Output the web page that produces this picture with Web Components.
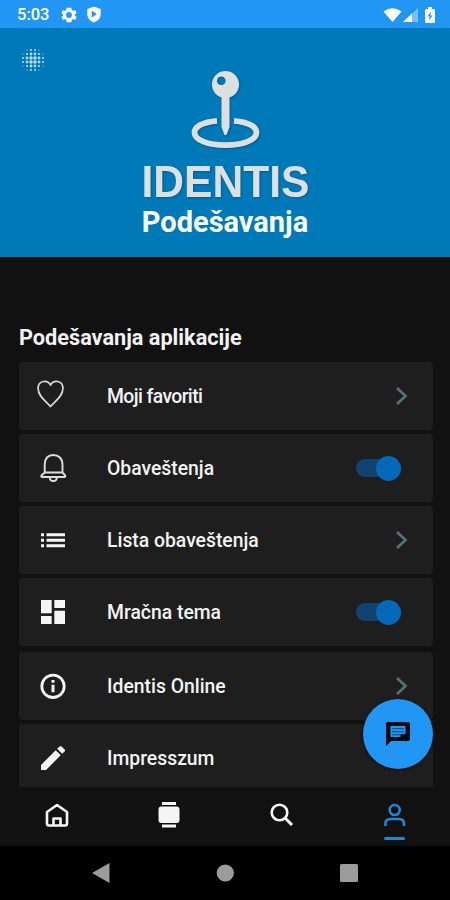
<!doctype html>
<html lang="sr-Latn">
    <head>
        <meta charset="utf-8" />
        <title>Identis - Podešavanja</title>
        <meta name="viewport" content="width=device-width, initial-scale=1.0" />
        <style>
        :root {
            --color-status: #2196f3;
            --color-header: #0079b9;
            --color-background: #111111;
            --color-row: #1e1e1e;
            --color-text: #f3f3f3;
            --color-accent: #2185d8;
        }

        body {
            margin: 0;
            background: #000;
            color: var(--color-text);
            font-family: Roboto, "Noto Sans", sans-serif;
            font-weight: 500;
        }

        setting-row[icon="heart"] {
            letter-spacing: -0.6px;
        }
        </style>
    </head>
    <body>
        <settings-app>
            <status-bar slot="top" time="5:03"></status-bar>
            <app-header slot="top">Podešavanja</app-header>
            <settings-list heading="Podešavanja aplikacije">
                <setting-row icon="heart" control="chevron">Moji favoriti</setting-row>
                <setting-row icon="bell" control="switch">Obaveštenja</setting-row>
                <setting-row icon="list" control="chevron">Lista obaveštenja</setting-row>
                <setting-row icon="dashboard" control="switch">Mračna tema</setting-row>
                <setting-row icon="info" control="chevron">Identis Online</setting-row>
                <setting-row icon="pencil">Impresszum</setting-row>
            </settings-list>
            <chat-button slot="floating"></chat-button>
            <tab-bar slot="bottom"></tab-bar>
            <system-bar slot="bottom"></system-bar>
        </settings-app>

        <template id="template-settings-app">
            <style>
            :host {
                display: flex;
                flex-direction: column;
                position: relative;
                width: 450px;
                height: 900px;
                overflow: hidden;
                background: var(--color-background);
            }

            main {
                flex: 1;
                min-height: 0;
                overflow: hidden;
            }

            /* the chat button floats over the list */
            #floating {
                position: absolute;
                right: 17px;
                bottom: 131px;
            }
            </style>
            <slot name="top"></slot>
            <main><slot></slot></main>
            <slot name="bottom"></slot>
            <div id="floating"><slot name="floating"></slot></div>
        </template>

        <template id="template-status-bar">
            <style>
            :host {
                display: flex;
                align-items: center;
                box-sizing: border-box;
                height: 28px;
                padding: 1px 15px 0 17px;
                background: var(--color-status);
                color: #fff;
                font-size: 16.5px;
            }

            #time { width: 44px; }
            #right { margin-left: auto; display: flex; align-items: center; }
            svg { display: block; fill: #fff; }
            #shield { margin-left: 9px; }
            #battery { margin-left: 7px; }
            </style>
            <span id="time"></span>
            <svg width="16" height="16" viewBox="2 2 20 20"><path fill-rule="evenodd" d="M19.4 13a7.5 7.5 0 0 0 0-2l2.1-1.6-2-3.5-2.500 1a7 7 0 0 0-1.700-1L15 3H9l-.4 2.900a7 7 0 0 0-1.700 1l-2.500-1-2 3.500L4.600 11a7.500 7.500 0 0 0 0 2l-2.100 1.600 2 3.500 2.500-1a7 7 0 0 0 1.700 1L9 21h6l.4-2.900a7 7 0 0 0 1.700-1l2.500 1 2-3.500zM12 15.600a3.600 3.600 0 1 1 0-7.200 3.600 3.600 0 0 1 0 7.200z"/></svg>
            <svg id="shield" width="16" height="17" viewBox="0 0 16 17"><path fill-rule="evenodd" d="M8 .5 14.700 3v5c0 4-2.600 7-6.700 8.500C3.900 15 1.300 12 1.300 8V3zM5.700 4.700v7L11 8z"/></svg>
            <div id="right">
                <svg width="19" height="14" viewBox="0 0 19 14"><path d="M.5 3.500Q9.500-3 18.500 3.500L9.500 14z"/></svg>
                <svg width="16" height="14" viewBox="0 0 16 14"><path opacity=".4" d="M16 0v14H1z"/><path d="M10 5.500V14H1z"/></svg>
                <svg id="battery" width="10" height="16" viewBox="0 0 10 16"><path d="M3 0h4v2h1.500Q10 2 10 3.500v11Q10 16 8.500 16h-7Q0 16 0 14.500v-11Q0 2 1.500 2H3z"/><path fill="#2196f3" d="M6 4.500 2.600 9.200h2L4 13.500l3.400-5h-2z"/></svg>
            </div>
        </template>

        <template id="template-app-header">
            <style>
            :host {
                display: grid;
                grid-template-columns: 66px 1fr 66px;
                box-sizing: border-box;
                height: 229px;
                background: var(--color-header);
                color: #fff;
            }

            #dots { margin: 20px 0 0 21px; }
            #brand { display: flex; flex-direction: column; align-items: center; padding-top: 38px; }
            #logo { overflow: visible; filter: drop-shadow(1px 1px 1px #00406880); }
            #title { margin-top: 2px; line-height: 36px; font-size: 29px; font-weight: 700; }
            svg { display: block; }
            </style>
            <svg id="dots" width="24" height="24" fill="#b9dcef"></svg>
            <div id="brand">
                <svg id="logo" width="190" height="136" viewBox="130 66 190 136">
                    <path fill="none" stroke="#dedfe1" stroke-width="5.800" d="M217 120.800C202 122 194.500 127 194.500 132.500C194.500 140 208 145.200 225.500 145.200S256.500 140 256.500 132.500C256.500 127 249 122 234 120.800"/>
                    <path fill="#dedfe1" fill-rule="evenodd" d="M225.500 71a13.500 13.500 0 0 1 4 26.400V127L226.500 135h-2L221.500 127V97.400A13.500 13.500 0 0 1 225.500 71zM221.300 76.500a4.300 4.300 0 1 0 .01 0z"/>
                    <text x="141.500" y="197" textLength="168" lengthAdjust="spacingAndGlyphs" fill="#dedfe1" font-family="Liberation Sans, Arial, sans-serif" font-size="45" font-weight="700">IDENTIS</text>
                </svg>
                <div id="title"><slot></slot></div>
            </div>
        </template>

        <template id="template-settings-list">
            <style>
            :host {
                display: block;
                padding: 66px 17px 0 19px;
            }

            h2 {
                margin: 0 0 9px;
                font-size: 21.700px;
                line-height: 30px;
                font-weight: 700;
            }

            #rows {
                display: flex;
                flex-direction: column;
                gap: 4px;
            }

            ::slotted(:nth-child(5)) { margin-top: 2px; }
            </style>
            <h2></h2>
            <div id="rows"><slot></slot></div>
        </template>

        <template id="template-setting-row">
            <style>
            :host {
                display: grid;
                grid-template-columns: 68px 1fr auto;
                align-items: center;
                box-sizing: border-box;
                height: 68px;
                flex: none;
                border-radius: 4px;
                padding: 0 24px 0 0;
                background: var(--color-row);
                font-size: 19.350px;
            }

            #icon { display: grid; place-items: center; }
            #label { padding: 1px 0 0 20px; white-space: nowrap; }
            svg { display: block; }

            #switch {
                display: flex;
                justify-content: flex-end;
                align-items: center;
                width: 45px;
                height: 18px;
                margin-right: 8px;
                border-radius: 9px;
                background: #10436f;
            }

            #switch i {
                flex: none;
                width: 25px;
                height: 25px;
                border-radius: 50%;
                background: #0569b9;
            }
            </style>
            <div id="icon"></div>
            <div id="label"><slot></slot></div>
            <div id="control"></div>
        </template>

        <template id="template-chat-button">
            <style>
            :host {
                display: grid;
                place-items: center;
                width: 70px;
                height: 70px;
                border-radius: 50%;
                background: var(--color-status);
                box-shadow: 0 1px 3px #000000c0;
            }
            </style>
            <svg width="26" height="26" viewBox="0 0 26 26"><path fill="#050b12" fill-rule="evenodd" d="M3 1h20q2 0 2 2v15q0 2-2 2H6l-5 5V3q0-2 2-2zM5.500 5v11h10v-3h5V5z"/><path stroke="#0e5590" stroke-width="1.300" d="M7 7.700h12M7 10.700h12M7 13.700h8"/></svg>
        </template>

        <template id="template-tab-bar">
            <style>
            :host {
                display: grid;
                grid-template-columns: repeat(4, 112.500px);
                height: 59px;
                background: var(--color-background);
                color: #f5f5f5;
            }

            div { display: flex; flex-direction: column; align-items: center; padding-top: 14px; }
            div.active { color: var(--color-accent); }
            div.active::after { content: ""; width: 21px; height: 3px; margin: 8px 0 0 1px; border-radius: 2px; background: currentColor; }
            svg { display: block; fill: none; stroke: currentColor; stroke-width: 2.600; }
            </style>
            <div><svg width="28" height="28" viewBox="0 0 28 28"><path stroke-linejoin="round" d="M5 11 15 4 25 11V22.500q0 2-2 2H7q-2 0-2-2zM11.500 24.500v-7h7v7"/></svg></div>
            <div><svg width="28" height="28" viewBox="0 0 28 28"><path fill="currentColor" stroke="none" d="M7 1h14v3H7zM7 23.500h14v3H7zM6.500 5.500h15q3 0 3 3V19q0 3-3 3h-15q-3 0-3-3V8.500q0-3 3-3z"/></svg></div>
            <div><svg width="28" height="28" viewBox="0 0 28 28"><circle cx="12.500" cy="11.500" r="7.800"/><path stroke-width="3" d="m18 17 7 7"/></svg></div>
            <div class="active"><svg width="28" height="28" viewBox="0 0 28 28"><circle cx="14.700" cy="9" r="5"/><path d="M5.400 25v-2q0-5 5-5H19q5 0 5 5v2"/></svg></div>
        </template>

        <template id="template-system-bar">
            <style>
            :host {
                display: flex;
                align-items: center;
                justify-content: center;
                gap: 106px;
                height: 54px;
                background: #000;
            }

            svg { display: block; fill: #9c9c9c; }
            </style>
            <svg width="18" height="20"><path d="M0 10 17.500 0v20z"/></svg>
            <svg width="18" height="18"><circle cx="9.300" cy="9" r="8.600"/></svg>
            <svg width="18" height="18"><rect width="18" height="18" rx="1.500"/></svg>
        </template>

        <script>
            const ICONS = {
                heart: `<svg width="32" height="32" viewBox="2.500 3 32 32" fill="none" stroke="#d8d8d8" stroke-width="1.700" stroke-linejoin="round"><path d="M16 29.500C12 24.500 3.600 19.500 3.600 11.500C3.600 3 13 2.500 16 8C19 2.500 28.400 3 28.400 11.500C28.400 19.500 20 24.500 16 29.500z"/></svg>`,
                bell: `<svg width="32" height="32" viewBox="0 0 32 32" fill="none" stroke="#dedede" stroke-width="1.900" stroke-linejoin="round"><path d="M7.700 20.500V12.500C7.700 6.500 11 3 16.300 3s9.200 3.500 9.200 9.500v8l2.700 3q.6 1.500-1 1.500H5.400q-1.600 0-1-1.500zM7 20.500h19M12.800 25.500q0 3.500 3.500 3.500t3.500-3.500"/></svg>`,
                list: `<svg width="32" height="32" viewBox="0 0 32 32" fill="none" stroke="#f5f5f5" stroke-width="2.900"><path d="M4 10.800h3M9.500 10.800H28M4 16.300h3M9.500 16.300H28M4 21.800h3M9.500 21.800H28"/></svg>`,
                dashboard: `<svg width="32" height="32" viewBox="0 0 24 24" fill="#f5f5f5"><path d="M3 13h8V3H3zM3 21h8v-6H3zM13 21h8V11h-8zM13 3v6h8V3z"/></svg>`,
                info: `<svg width="32" height="32" viewBox="0 0 32 32" fill="none" stroke="#f5f5f5" stroke-width="2.800"><circle cx="16" cy="16.300" r="11.200"/><path stroke-width="3" d="M16 14.800V22.300M16 10v2.800"/></svg>`,
                pencil: `<svg width="32" height="32" viewBox="0 0 24 24" fill="#f5f5f5"><path d="M3 17.250V21h3.750L17.810 9.940l-3.750-3.750zM20.710 7.040a1 1 0 0 0 0-1.410l-2.340-2.340a1 1 0 0 0-1.410 0l-1.830 1.830 3.750 3.750z"/></svg>`
            }

            const CONTROLS = {
                chevron: `<svg width="14" height="20" viewBox="0 0 14 20" fill="none" stroke="#587078" stroke-width="2.700"><path d="m2 2 8.500 8L2 18"/></svg>`,
                switch: `<div id="switch"><i></i></div>`
            }

            class TemplateElement extends HTMLElement {
                constructor() {
                    super()

                    const template = document.querySelector("#template-" + this.localName)
                    this.root = this.attachShadow({ mode: "open" })
                    this.root.appendChild(template.content.cloneNode(true))
                }
            }

            class StatusBar extends TemplateElement {
                connectedCallback() {
                    this.root.querySelector("#time").textContent = this.getAttribute("time")
                }
            }

            class AppHeader extends TemplateElement {
                connectedCallback() {
                    // round dot grid, dots shrink towards the rim
                    const radii = [ [ 0, .6, 1, 1, .6, 0 ], [ .6, 1.1, 1.4, 1.4, 1.1, .6 ], [ 1, 1.4, 1.8, 1.8, 1.4, 1 ] ]
                    const rows = [ ...radii, ...radii.slice().reverse() ]
                    this.root.querySelector("#dots").innerHTML = rows.map((row, y) =>
                        row.map((r, x) => `<circle cx="${2 + x * 4}" cy="${2 + y * 4}" r="${r}"/>`).join("")
                    ).join("")
                }
            }

            class SettingsList extends TemplateElement {
                connectedCallback() {
                    this.root.querySelector("h2").textContent = this.getAttribute("heading")
                }
            }

            class SettingRow extends TemplateElement {
                connectedCallback() {
                    this.root.querySelector("#icon").innerHTML = ICONS[this.getAttribute("icon")]
                    this.root.querySelector("#control").innerHTML = CONTROLS[this.getAttribute("control")] || ""
                }
            }

            customElements.define("settings-app", class extends TemplateElement {})
            customElements.define("status-bar", StatusBar)
            customElements.define("app-header", AppHeader)
            customElements.define("settings-list", SettingsList)
            customElements.define("setting-row", SettingRow)
            customElements.define("chat-button", class extends TemplateElement {})
            customElements.define("tab-bar", class extends TemplateElement {})
            customElements.define("system-bar", class extends TemplateElement {})
        </script>
    </body>
</html>
